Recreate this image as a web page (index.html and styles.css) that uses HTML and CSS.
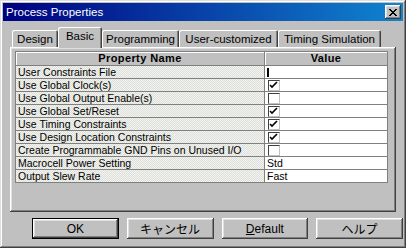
FILE: index.html
```html
<!DOCTYPE html>
<html lang="ja">
<head>
  <meta charset="UTF-8">
  <title>Process Properties</title>
  <link rel="stylesheet" href="styles.css">
</head>
<body>
  <div class="window">
    <div class="titlebar">
      <span class="title">Process Properties</span>
      <div class="close">
        <svg width="8" height="7" viewBox="0 0 8 7"><path d="M0 0L7 7M1 0L8 7M7 0L0 7M8 0L1 7" stroke="#000" stroke-width="1"/></svg>
      </div>
    </div>
    <div class="content">
      <div class="tabs">
        <div class="tab tab-design">Design</div>
        <div class="tab tab-basic active">Basic</div>
        <div class="tab tab-prog">Programming</div>
        <div class="tab tab-user">User-customized</div>
        <div class="tab tab-timing">Timing Simulation</div>
      </div>
      <div class="panel">
        <div class="grid">
          <div class="row head">
            <div class="cell name">Property Name</div>
            <div class="cell value">Value</div>
          </div>
          <div class="row">
            <div class="cell name">User Constraints File</div>
            <div class="cell value"><span class="caret"></span></div>
          </div>
          <div class="row">
            <div class="cell name">Use Global Clock(s)</div>
            <div class="cell value"><span class="check"><svg width="10" height="9" viewBox="0 0 10 9"><path d="M1 4L3 6L8 1" fill="none" stroke="#000" stroke-width="1.6"/></svg></span></div>
          </div>
          <div class="row">
            <div class="cell name">Use Global Output Enable(s)</div>
            <div class="cell value"><span class="check"></span></div>
          </div>
          <div class="row">
            <div class="cell name">Use Global Set/Reset</div>
            <div class="cell value"><span class="check"><svg width="10" height="9" viewBox="0 0 10 9"><path d="M1 4L3 6L8 1" fill="none" stroke="#000" stroke-width="1.6"/></svg></span></div>
          </div>
          <div class="row">
            <div class="cell name">Use Timing Constraints</div>
            <div class="cell value"><span class="check"><svg width="10" height="9" viewBox="0 0 10 9"><path d="M1 4L3 6L8 1" fill="none" stroke="#000" stroke-width="1.6"/></svg></span></div>
          </div>
          <div class="row">
            <div class="cell name">Use Design Location Constraints</div>
            <div class="cell value"><span class="check"><svg width="10" height="9" viewBox="0 0 10 9"><path d="M1 4L3 6L8 1" fill="none" stroke="#000" stroke-width="1.6"/></svg></span></div>
          </div>
          <div class="row">
            <div class="cell name">Create Programmable GND Pins on Unused I/O</div>
            <div class="cell value"><span class="check"></span></div>
          </div>
          <div class="row">
            <div class="cell name">Macrocell Power Setting</div>
            <div class="cell value">Std</div>
          </div>
          <div class="row">
            <div class="cell name">Output Slew Rate</div>
            <div class="cell value">Fast</div>
          </div>
        </div>
      </div>
      <div class="buttons">
        <div class="btn default"><span>OK</span></div>
        <div class="btn">キャンセル</div>
        <div class="btn"><span><u>D</u>efault</span></div>
        <div class="btn">ヘルプ</div>
      </div>
    </div>
  </div>
</body>
</html>
```

FILE: styles.css
```css
body {
  margin: 0;
  background-color: #c0c0c0;
  font-family: "Liberation Sans", Arial, "Noto Sans CJK JP", sans-serif;
  color: #000;
  overflow: hidden;
}

.window {
  box-sizing: border-box;
  width: 406px;
  height: 248px;
  padding: 3px;
  background-color: #c0c0c0;
  box-shadow: inset -1px -1px #404040, inset 1px 1px #dfdfdf,
              inset -2px -2px #808080, inset 2px 2px #fff;
}

.titlebar {
  height: 18px;
  display: flex;
  align-items: center;
  justify-content: space-between;
  padding: 0 2px 0 3px;
  background: linear-gradient(to right, #000080, #1084d0);
}

.title {
  color: #fff;
  font-size: 11.5px;
}

.close {
  box-sizing: border-box;
  width: 16px;
  height: 14px;
  display: flex;
  align-items: center;
  justify-content: center;
  background-color: #c0c0c0;
  box-shadow: inset -1px -1px #404040, inset 1px 1px #fff,
              inset -2px -2px #808080, inset 2px 2px #dfdfdf;
}

.content {
  padding: 6px 0 0 7px;
}

/* tab strip */
.tabs {
  display: flex;
  align-items: flex-end;
  height: 20px;
  padding-left: 2px;
  position: relative;
  z-index: 2;
}

.tab {
  box-sizing: border-box;
  height: 17px;
  display: flex;
  align-items: center;
  justify-content: center;
  padding-top: 1px;
  font-size: 11.5px;
  background-color: #c0c0c0;
  border-radius: 2px 2px 0 0;
  box-shadow: inset 1px 1px #fff, inset -1px 0 #404040, inset -2px 0 #808080;
}

.tab.active {
  height: 21px;
  margin-bottom: -1px;
  padding-top: 0;
  padding-bottom: 3px;
}

.tab-design { width: 46px; }
.tab-basic { width: 44px; }
.tab-prog { width: 77px; }
.tab-user { width: 99px; }
.tab-timing { width: 103px; }

.panel {
  box-sizing: border-box;
  width: 386px;
  height: 165px;
  padding: 4px 0 0 5px;
  box-shadow: inset -1px -1px #404040, inset 1px 1px #fff,
              inset -2px -2px #808080, inset 2px 2px #dfdfdf;
}

/* property grid */
.grid {
  width: 373px;
  box-sizing: border-box;
  border: 1px solid #808080;
  font-size: 10.5px;
}

.row {
  display: flex;
  box-sizing: border-box;
  height: 13px;
  border-bottom: 1px solid #808080;
}

.row:last-child {
  height: 12px;
  border-bottom: none;
}

.cell {
  box-sizing: border-box;
  height: 12px;
  line-height: 12px;
  white-space: nowrap;
  overflow: hidden;
}

.cell.name {
  width: 249px;
  padding-left: 2px;
  border-right: 1px solid #808080;
  background: repeating-conic-gradient(#dde0d8 0 25%, #f3f3f1 0 50%) 0 0 / 2px 2px;
}

.cell.value {
  flex: 1;
  padding-left: 2px;
  background-color: #fff;
}

.row.head {
  height: 14px;
}

.row.head .cell {
  height: 13px;
  line-height: 13px;
  padding: 0;
  text-align: center;
  font-weight: bold;
  font-size: 11px;
  letter-spacing: 0.4px;
  background: #c0c0c0;
  box-shadow: inset 1px 1px #fff;
}

.caret {
  display: block;
  width: 2px;
  height: 9px;
  margin-top: 2px;
  background-color: #000;
}

.check {
  display: block;
  box-sizing: border-box;
  width: 12px;
  height: 11px;
  margin: 1px 0 0 1px;
  background-color: #fff;
  border: 1px solid;
  border-color: #404040 #c0c0c0 #c0c0c0 #404040;
}

.check svg {
  display: block;
}

/* dialog buttons */
.buttons {
  display: flex;
  gap: 8px;
  padding-left: 22px;
  margin-top: 6px;
}

.btn {
  box-sizing: border-box;
  width: 87px;
  height: 21px;
  display: flex;
  align-items: center;
  justify-content: center;
  font-size: 12px;
  background-color: #c0c0c0;
  box-shadow: inset -1px -1px #404040, inset 1px 1px #fff,
              inset -2px -2px #808080, inset 2px 2px #dfdfdf;
}

.btn.default {
  box-shadow: inset 0 0 0 1px #000, inset -2px -2px #404040, inset 2px 2px #fff,
              inset -3px -3px #808080, inset 3px 3px #dfdfdf;
}
```
